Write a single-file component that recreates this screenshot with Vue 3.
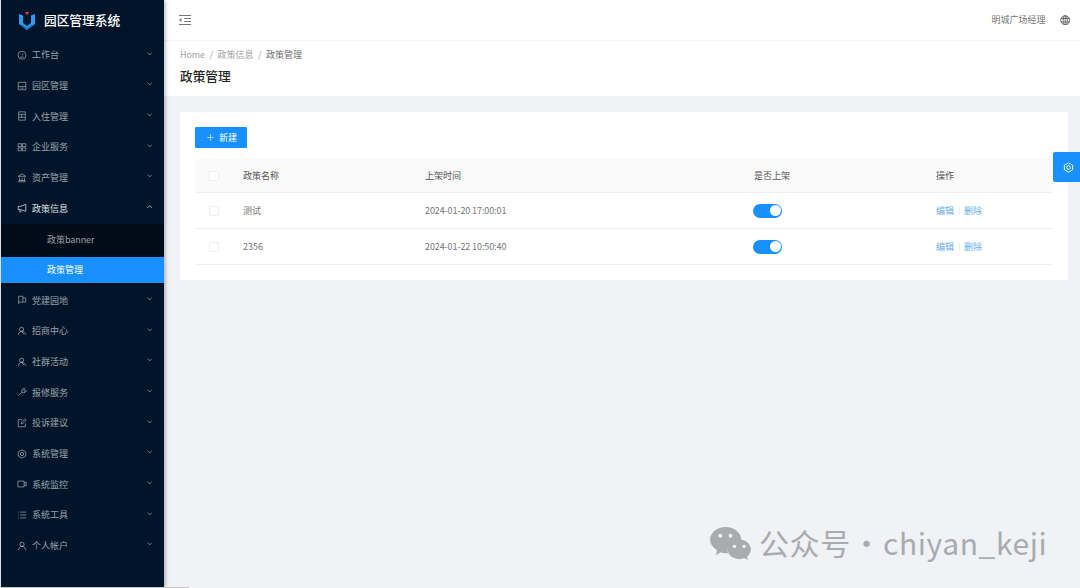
<script setup>
const before = [
  { label: '工作台', icon: 'dash' },
  { label: '园区管理', icon: 'park' },
  { label: '入住管理', icon: 'form' },
  { label: '企业服务', icon: 'apps' },
  { label: '资产管理', icon: 'bank' }
]
const after = [
  { label: '党建园地', icon: 'flag' },
  { label: '招商中心', icon: 'team' },
  { label: '社群活动', icon: 'team' },
  { label: '报修服务', icon: 'tool' },
  { label: '投诉建议', icon: 'edit' },
  { label: '系统管理', icon: 'gear' },
  { label: '系统监控', icon: 'video' },
  { label: '系统工具', icon: 'list' },
  { label: '个人帐户', icon: 'user' }
]
const icons = {
  dash: ['M12 3a9.500 9.500 0 1 1 0 19 9.500 9.500 0 0 1 0-19z', 'M12 13l3-4', 'M8 17h8'],
  park: ['M3 3h18v18H3z', 'M3 13h18', 'M8 17h8'],
  form: ['M4 2h16v20H4z', 'M4 8h16', 'M11 8v7', 'M4 15h16'],
  apps: ['M3 4h8v7H3z', 'M13 4h8v7h-8z', 'M3 14h8v7H3z', 'M13 14h8v7h-8z'],
  bank: ['M12 2l9 6H3z', 'M3 21h18', 'M6 11v7', 'M12 11v7', 'M18 11v7', 'M4 18h16'],
  flag: ['M4 22V3h10v14H4', 'M14 7h7v10h-7'],
  team: ['M11 3a5 5 0 1 1 0 10 5 5 0 0 1 0-10z', 'M3 21c1-5 4-8 8-8 5 0 9 3 10 8', 'M12 14l5 6'],
  tool: ['M3 21l9-9', 'M12 12a5.500 5.500 0 0 1 7-8l-3 3 1 3 3 0 2-2a5.500 5.500 0 0 1-8 5z'],
  edit: ['M20 13v8H3V4h9', 'M10 14l1-4 8-8 3 3-8 8z'],
  gear: ['M12 2l9 5v10l-9 5-9-5V7z', 'M12 8a4 4 0 1 1 0 8 4 4 0 0 1 0-8z'],
  video: ['M2 5h15v14H2z', 'M17 10l5-3v10l-5-3'],
  list: ['M8 5h14', 'M8 12h14', 'M8 19h14', 'M2 5h2', 'M2 12h2', 'M2 19h2'],
  user: ['M12 3a5 5 0 1 1 0 10 5 5 0 0 1 0-10z', 'M3 22c1-6 4-9 9-9s8 3 9 9'],
  notice: ['M21 3v17L9 16H3V8h6z', 'M7 16v5h4']
}
const rows = [
  { name: '测试', time: '2024-01-20 17:00:01' },
  { name: '2356', time: '2024-01-22 10:50:40' }
]
</script>

<template>
  <div class="page">
    <aside class="side">
      <div class="brand">
        <svg class="logo" viewBox="0 0 16 18">
          <path d="M0 2l4 1.500V11l4 3 4-3V3.500L16 2v10l-8 6-8-6z" fill="#2f9bf5" />
          <path d="M3 12.500l5 3.500 5-3.500 1 .700-6 4.800-6-4.800z" fill="#1a6fd0" />
          <path d="M6 0h4L8 3z" fill="#e8484f" />
        </svg>
        <span class="brand-name">园区管理系统</span>
      </div>
      <nav class="menu">
        <div v-for="m in before" :key="m.label" class="item">
          <svg class="ico" viewBox="0 0 24 24"><path v-for="d in icons[m.icon]" :key="d" :d="d" /></svg>
          <span class="label">{{ m.label }}</span>
          <svg class="chev" viewBox="0 0 10 6"><path d="M1 1l4 4 4-4" /></svg>
        </div>
        <div class="item open">
          <svg class="ico" viewBox="0 0 24 24"><path v-for="d in icons.notice" :key="d" :d="d" /></svg>
          <span class="label">政策信息</span>
          <svg class="chev" viewBox="0 0 10 6"><path d="M1 5l4-4 4 4" /></svg>
        </div>
        <div class="sub">
          <div class="sub-item">政策<span class="latin">banner</span></div>
          <div class="sub-item active">政策管理</div>
        </div>
        <div v-for="m in after" :key="m.label" class="item">
          <svg class="ico" viewBox="0 0 24 24"><path v-for="d in icons[m.icon]" :key="d" :d="d" /></svg>
          <span class="label">{{ m.label }}</span>
          <svg class="chev" viewBox="0 0 10 6"><path d="M1 1l4 4 4-4" /></svg>
        </div>
      </nav>
    </aside>

    <main class="main">
      <header class="top">
        <svg class="fold" viewBox="0 0 12 10">
          <path d="M0 .5h12M5 3.500h7M5 6.500h7M0 9.500h12" />
          <path class="fold-arrow" d="M0 5l2.500-2v4z" />
        </svg>
        <div class="top-right">
          <span class="user">明城广场经理</span>
          <svg class="globe" viewBox="0 0 12 12">
            <circle cx="6" cy="6" r="5.200" />
            <ellipse cx="6" cy="6" rx="2.400" ry="5.200" />
            <path d="M6 .8v10.400M1 4h10M1 8h10" />
          </svg>
        </div>
      </header>

      <section class="head">
        <div class="crumb">
          <span class="latin">Home</span><i>/</i><span>政策信息</span><i>/</i><span class="cur">政策管理</span>
        </div>
        <h1 class="title">政策管理</h1>
      </section>

      <section class="content">
        <div class="card">
          <button class="btn">
            <svg viewBox="0 0 10 10"><path d="M5 .5v9M.5 5h9" /></svg>
            <span>新建</span>
          </button>
          <div class="table">
            <div class="tr th">
              <div><span class="check"></span></div>
              <div>政策名称</div>
              <div>上架时间</div>
              <div>是否上架</div>
              <div>操作</div>
            </div>
            <div v-for="r in rows" :key="r.name" class="tr">
              <div><span class="check"></span></div>
              <div>{{ r.name }}</div>
              <div class="latin">{{ r.time }}</div>
              <div><span class="switch"><span class="knob"></span></span></div>
              <div class="ops"><a>编辑</a><em></em><a>删除</a></div>
            </div>
          </div>
        </div>
      </section>
    </main>

    <div class="float-btn">
      <svg viewBox="0 0 24 24"><path d="M12 2l9 5v10l-9 5-9-5V7z" /><circle cx="12" cy="12" r="4" /></svg>
    </div>

    <div class="mark">
      <svg class="wx" viewBox="0 0 42 34">
        <path d="M16 0c9 0 16 6 16 13 0 1 0 1-1 2-6-1-13 3-13 9 0 1 0 2 1 3h-3c-2 0-3 0-5-1l-5 3 1-5C3 21 0 18 0 13 0 6 7 0 16 0z" fill="#a9abae" />
        <path d="M30 13c7 0 12 5 12 10 0 3-2 6-4 8l1 3-4-2c-2 1-3 1-5 1-7 0-12-5-12-10s5-10 12-10z" fill="#a9abae" />
        <circle cx="10.500" cy="9" r="2" fill="#f0f2f5" /><circle cx="21" cy="9" r="2" fill="#f0f2f5" />
        <circle cx="25" cy="20" r="1.700" fill="#f0f2f5" /><circle cx="35" cy="20" r="1.700" fill="#f0f2f5" />
      </svg>
      <span class="mark-text">公众号 · chiyan_keji</span>
    </div>
    <div class="scroll"></div>
  </div>
</template>

<style>
html, body { margin: 0; background: #f0f2f5; overflow: hidden; }
</style>

<style scoped>
.page {
  position: relative;
  display: flex;
  width: 1080px;
  height: 588px;
  overflow: hidden;
  font-family: "Noto Sans CJK SC", "Noto Sans", sans-serif;
  font-size: 9px;
  color: #595959;
  background: #f0f2f5;
}
.latin { letter-spacing: -.1px; }
.side {
  flex: 0 0 163px;
  margin-left: 1px;
  background: #001529;
  box-shadow: 1px 0 4px rgba(0, 21, 41, .35);
  z-index: 2;
}
.brand { display: flex; align-items: center; height: 39.6px; padding-left: 18px; box-sizing: border-box; }
.logo { width: 16px; height: 18px; margin-right: 10px; margin-top: 2px; }
.brand-name { font-size: 12.700px; font-weight: 500; color: #fff; margin-left: -1px; }
.item {
  display: flex;
  align-items: center;
  height: 30.67px;
  padding: 0 12px 0 16px;
  color: rgba(255, 255, 255, .6);
}
.item.open { color: #fff; opacity: .88; }
.ico { width: 10px; height: 10px; margin-right: 5px; fill: none; stroke: currentColor; stroke-width: 1.800; flex: none; }
.label { flex: 1; font-size: 9px; }
.chev { width: 5.500px; height: 3.500px; margin-top: -3px; fill: none; stroke: currentColor; stroke-width: 1.300; }
.sub { background: #000c17; padding: 3px 0 2.400px; display: flex; flex-direction: column; gap: 4px; }
.sub-item { height: 26px; line-height: 25px; padding-left: 46px; color: rgba(255, 255, 255, .6); }
.sub-item.active { background: #1890ff; color: #fff; }

.main { flex: 1; min-width: 0; display: flex; flex-direction: column; }
.top {
  display: flex;
  align-items: center;
  justify-content: space-between;
  height: 40px;
  padding: 0 10px 0 15px;
  background: #fff;
  border-bottom: 1px solid #f5f5f5;
  flex: none;
}
.fold { width: 12px; height: 10px; fill: none; stroke: #777; stroke-width: 1; margin-top: -1px; }
.fold-arrow { fill: #777; stroke: none; }
.top-right { display: flex; align-items: center; gap: 14px; }
.user { color: #777; margin-top: -1px; }
.globe { width: 10.500px; height: 10.500px; fill: none; stroke: #666; stroke-width: 1.100; }
.head { height: 55px; padding-left: 16px; background: #fff; flex: none; box-sizing: border-box; }
.crumb { display: flex; align-items: center; height: 13px; margin-top: 6.500px; color: #a3a3a3; }
.crumb i { font-style: normal; margin: 0 4.500px; }
.crumb .cur { color: #727272; }
.title { margin: 6.500px 0 0; font-size: 12.700px; line-height: 18px; font-weight: 500; color: #262626; }
.content { flex: 1; padding: 16px 12px 0 16px; }
.card { height: 168px; padding: 15px; box-sizing: border-box; background: #fff; }
.btn {
  display: flex;
  align-items: center;
  gap: 5px;
  width: 52px;
  height: 21px;
  padding: 0 0 0 12px;
  box-sizing: border-box;
  border: 0;
  border-radius: 1px;
  background: #1890ff;
  color: #fff;
  font: inherit;
}
.btn svg { width: 7px; height: 7px; fill: none; stroke: #fff; stroke-width: .9; }
.table { margin-top: 11px; }
.tr {
  display: grid;
  grid-template-columns: 48px 182px 329px 182px 1fr;
  align-items: center;
  height: 36px;
  box-sizing: border-box;
  border-bottom: 1px solid #f0f0f0;
  color: #777;
}
.tr > div:first-child { padding-left: 14px; display: flex; }
.th { height: 34px; background: #fafafa; color: #555; }
.check { width: 10px; height: 10px; box-sizing: border-box; border: 1px solid #eee; border-radius: 1px; background: #fff; }
.switch {
  position: relative;
  display: block;
  width: 29px;
  height: 14px;
  margin-left: -1px;
  border-radius: 7px;
  background: #1890ff;
}
.knob {
  position: absolute;
  top: 1.500px;
  right: 1.500px;
  width: 11px;
  height: 11px;
  border-radius: 50%;
  background: #fff;
}
.ops { display: flex; align-items: center; color: #6aaee8; }
.ops em { width: 1px; height: 8px; margin: 0 4.500px; background: #eee; }
.float-btn {
  position: absolute;
  left: 1053px;
  top: 152px;
  width: 27px;
  height: 30px;
  padding-left: 4px;
  box-sizing: border-box;
  display: flex;
  align-items: center;
  justify-content: center;
  background: #1890ff;
  border-radius: 2px 0 0 2px;
  z-index: 3;
}
.float-btn svg { width: 11px; height: 11px; fill: none; stroke: #fff; stroke-width: 2; }
.mark {
  position: absolute;
  left: 710px;
  top: 521px;
  display: flex;
  align-items: center;
  gap: 8px;
  height: 44px;
  font-size: 30px;
  letter-spacing: .6px;
  word-spacing: -6.500px;
  color: #a9abae;
  white-space: nowrap;
  z-index: 4;
}
.mark-text { margin-top: -2px; }
.wx { width: 41px; height: 33px; }
.scroll { position: absolute; left: 0; bottom: 0; width: 189px; height: 1px; background: #c4c4c4; z-index: 5; }
</style>
